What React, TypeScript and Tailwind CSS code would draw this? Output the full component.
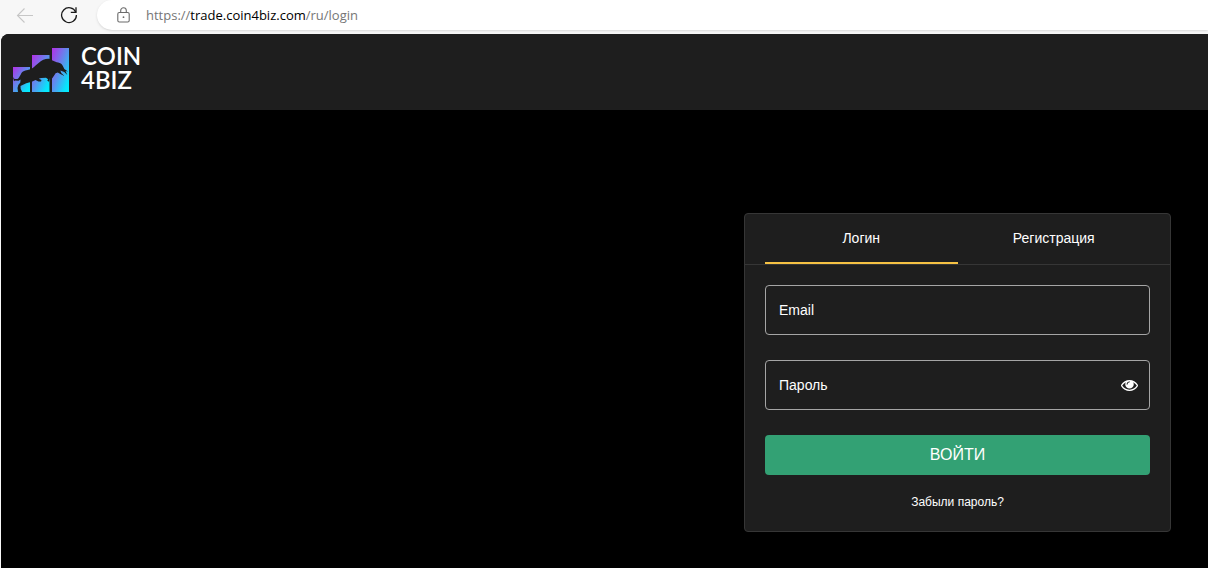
import React, { useState } from "react";

const BrowserBar = () => {
  return (
    <div className="flex h-[34px] items-start bg-[#f7f7f7]">
      <div className="flex h-[30px] w-[97px] shrink-0 items-center gap-[26px] pl-4">
        <button type="button" aria-label="Назад" disabled>
          <svg width="18" height="16" viewBox="0 0 18 16" fill="none" stroke="#c6c6c6" strokeWidth="1.1">
            <path d="M17 8.5H1.5M8.5 1.5l-7 7 7 7" />
          </svg>
        </button>
        <button type="button" aria-label="Обновить">
          <svg width="18" height="18" viewBox="0 0 18 18" fill="none" stroke="#1b1b1b" strokeWidth="1.3">
            <path d="M15.8 6.2A7.4 7.4 0 1 0 16.4 9" />
            <path d="M16 1.2v5.2h-5.2" />
          </svg>
        </button>
      </div>
      <div className="flex h-[30px] flex-1 items-center gap-4 rounded-l-full bg-white pl-5 shadow-sm">
        <svg width="13" height="16" viewBox="0 0 13 16" fill="none" stroke="#6b6b6b" strokeWidth="1.1">
          <rect x="0.8" y="5.5" width="11.4" height="9.5" rx="1.5" />
          <path d="M3.7 5.5V3.6a2.8 2.8 0 0 1 5.6 0v1.9" />
          <circle cx="6.5" cy="10.2" r="0.9" fill="#6b6b6b" stroke="none" />
        </svg>
        <p className="pt-px font-['Open_Sans','Noto_Sans',sans-serif] text-[13px] text-[#767676]">
          https://<span className="text-black">trade.coin4biz.com</span>/ru/login
        </p>
      </div>
    </div>
  );
};

const Logo = () => {
  return (
    <a href="/ru" className="flex items-end gap-3 text-white">
      <svg width="56" height="44" viewBox="0 0 56 44">
        <defs>
          <linearGradient id="bar" x1="0" y1="0" x2="1" y2="1">
            <stop offset="0" stopColor="#b32fe6" />
            <stop offset="0.5" stopColor="#5a92ee" />
            <stop offset="0.85" stopColor="#08e4fb" />
            <stop offset="1" stopColor="#00f0ff" />
          </linearGradient>
        </defs>
        <path d="M0 19h17v25H0z" fill="url(#bar)" />
        <path d="M19 7h17.5v37H19z" fill="url(#bar)" />
        <path d="M39 0h17v44H39z" fill="url(#bar)" />
        {/* bull */}
        <path
          d="M0 29l1.500 2L4.500 31C6 30 6.500 28.500 7.500 27c.8-1.500 1-2.500 2.500-3.500 3-1.500 6.500-1.500 9.700-3.500 2.500-1.500 3.300-3.200 5.600-4.700
          C27 13.500 28.500 12.500 30.300 11.700c2-.8 4-1.200 5.700-1 1.300.2 2 1 3 1.600 1.500.8 3 1.300 4.700 2 2 .4 4 .8 5 2 1.400 1.700 1.800 3.200 2.600 4.700
          l3.700 2.500-2.500-.5 1.800 4-3-3-4-1.500 1 2.500 3.200 3-4.200-2-2.500-1.500-2.200.8-1.800 2.700-1.500 2.300-2.300-.6-1 4-1.700-1 .8-1.500-2.100-1.500-5 .3
          -2.300.8 2.800 1.200-.5 1.500h-2.500l-3-1.500-3.700 1.700-5.600 1.600L7.500 38l.2 3 1.500 3H5l-.5-4 .8-3 2-2.500.2-3-2 1.300-3.500-.3-1 .7-.500-2z"
          fill="#1d1d1d"
        />
      </svg>
      <span className="flex flex-col font-['Lato',sans-serif] text-2xl leading-6 font-semibold">
        <span>COIN</span>
        <span>4BIZ</span>
      </span>
    </a>
  );
};

const LoginCard = () => {
  const [showPassword, setShowPassword] = useState(false);

  return (
    <div className="w-full max-w-[427px] self-start rounded-[4px] border border-[#363636] bg-[#1e1e1e] text-white">
      <div className="flex border-b border-[#363636] px-5 text-sm">
        <button type="button" className="h-[50px] flex-1 border-b-2 border-[#f6c244]">
          Логин
        </button>
        <button type="button" className="h-[50px] flex-1 border-b-2 border-transparent">
          Регистрация
        </button>
      </div>
      <form className="flex flex-col px-5 pt-5 pb-5" onSubmit={(e) => e.preventDefault()}>
        <div className="mb-[25px] flex h-[50px] items-center rounded-[4px] border border-[#a5a5a5] pr-[11px] pl-[13px] text-sm">
          <label htmlFor="email">Email</label>
          <input id="email" type="email" className="ml-2 min-w-0 flex-1 bg-transparent outline-none" />
        </div>
        <div className="mb-[25px] flex h-[50px] items-center rounded-[4px] border border-[#a5a5a5] pr-[11px] pl-[13px] text-sm">
          <label htmlFor="password">Пароль</label>
          <input
            id="password"
            type={showPassword ? "text" : "password"}
            className="ml-2 min-w-0 flex-1 bg-transparent outline-none"
          />
          <button type="button" aria-label="Показать пароль" onClick={() => setShowPassword(!showPassword)}>
            <svg width="17" height="11" viewBox="0 384 1792 1152" fill="#fff">
              <path d="M1664 960q-152-236-381-353 61 104 61 225 0 185-131.5 316.5t-316.5 131.5-316.5-131.5-131.5-316.5q0-121 61-225-229 117-381 353 133 205 333.5 326.5t434.5 121.5 434.5-121.5 333.5-326.5zm-720-384q0-20-14-34t-34-14q-125 0-214.5 89.5t-89.5 214.5q0 20 14 34t34 14 34-14 14-34q0-86 61-147t147-61q20 0 34-14t14-34zm848 384q0 34-20 69-140 230-376.5 368.5t-499.5 138.5-499.5-139-376.5-368q-20-35-20-69t20-69q140-229 376.5-368t499.5-139 499.5 139 376.5 368q20 35 20 69z" />
            </svg>
          </button>
        </div>
        <button type="submit" className="h-10 rounded-[4px] bg-[#33a174] text-base">
          ВОЙТИ
        </button>
        <a href="/ru/forgot-password" className="mt-[18px] self-center text-xs leading-[18px]">
          Забыли пароль?
        </a>
      </form>
    </div>
  );
};

const App = () => {
  return (
    <div className="flex min-h-screen flex-col bg-[#f7f7f7] font-['Liberation_Sans',Arial,sans-serif]">
      <BrowserBar />
      <div className="ml-px flex flex-1 flex-col overflow-hidden rounded-tl-lg bg-black">
        <header className="flex h-[76px] items-start bg-[#1e1e1e] px-3 pt-[10px]">
          <Logo />
        </header>
        <main className="flex flex-1 justify-end pt-[103px] pr-[37px] pb-9 pl-9">
          <LoginCard />
        </main>
      </div>
    </div>
  );
};

export default App;
